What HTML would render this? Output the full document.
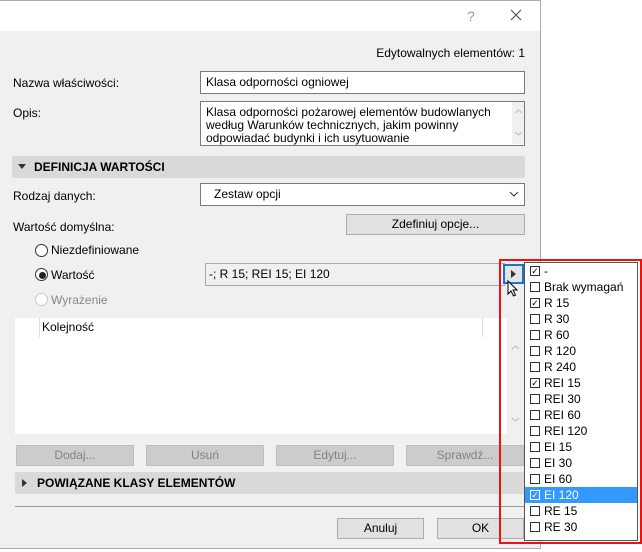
<!DOCTYPE html>
<html><head><meta charset="utf-8"><style>
*{box-sizing:border-box;margin:0;padding:0}
body{width:642px;height:552px;background:#fff;font-family:"Liberation Sans",sans-serif;font-size:12px;color:#000;position:relative;overflow:hidden}
.a{position:absolute}
.dlg{left:0;top:0;width:541px;height:549px;background:#f0f0f0;border-right:1px solid #aaa;border-bottom:1px solid #aaa;border-top:1px solid #aaa}
.title{left:0;top:1px;width:540px;height:30px;background:#fff}
.inp{background:#fff;border:1px solid #7a7a7a;padding:3px 5px;line-height:14px}
.sec{background:#d9d9d9;border-radius:2px;font-weight:bold;padding-left:22px;line-height:22px}
.btn{background:#e1e1e1;border:1px solid #adadad;text-align:center;line-height:18px}
.dis{background:#ccc;border:1px solid #bfbfbf;color:#838383;text-align:center;line-height:18px}
.rad{width:13px;height:13px;border:1px solid #333;border-radius:50%;background:#fff}
.it{position:absolute;left:0;width:112px;height:16px;line-height:16px;padding-left:19px}
.cb{position:absolute;left:5px;top:3px;width:10px;height:10px;border:1px solid #333;background:#fff;font-size:9px;line-height:8px;text-align:center}
</style></head><body>
<div class="a dlg"></div>
<div class="a title"></div>
<div class="a" style="left:467px;top:8px;color:#999;font-size:14px">?</div>
<svg class="a" style="left:510px;top:9px" width="12" height="12"><path d="M1 1L11 11M11 1L1 11" stroke="#555" stroke-width="1.2"/></svg>
<div class="a" style="left:325px;top:46px;width:200px;text-align:right;white-space:nowrap">Edytowalnych elementów: 1</div>
<div class="a" style="left:13px;top:76px">Nazwa właściwości:</div>
<div class="a inp" style="left:200px;top:71px;width:325px;height:23px">Klasa odporności ogniowej</div>
<div class="a" style="left:13px;top:106px">Opis:</div>
<div class="a inp" style="left:200px;top:101px;width:325px;height:45px;line-height:13px;padding-top:4px">Klasa odporności pożarowej elementów budowlanych<br>według Warunków technicznych, jakim powinny<br>odpowiadać budynki i ich usytuowanie</div>
<div class="a" style="left:512px;top:102px;width:12px;height:42px;background:#f0f0f0"></div>
<svg class="a" style="left:514px;top:108px" width="9" height="30"><path d="M1 5L4.5 2L8 5M1 24L4.5 27L8 24" stroke="#bbb" fill="none"/></svg>
<div class="a sec" style="left:12px;top:156px;width:513px;height:22px">DEFINICJA WARTOŚCI</div>
<svg class="a" style="left:18px;top:164px" width="8" height="6"><path d="M0 0H8L4 5Z" fill="#333"/></svg>
<div class="a" style="left:13px;top:189px">Rodzaj danych:</div>
<div class="a inp" style="left:200px;top:183px;width:325px;height:23px;padding-left:13px">Zestaw opcji</div>
<svg class="a" style="left:509px;top:191px" width="10" height="6"><path d="M1 1L5 5L9 1" stroke="#333" fill="none"/></svg>
<div class="a" style="left:13px;top:220px">Wartość domyślna:</div>
<div class="a btn" style="left:346px;top:214px;width:179px;height:21px">Zdefiniuj opcje...</div>
<div class="a rad" style="left:35px;top:244px"></div>
<div class="a" style="left:51px;top:243px">Niezdefiniowane</div>
<div class="a rad" style="left:35px;top:268px"></div>
<div class="a" style="left:39px;top:272px;width:7px;height:7px;border-radius:50%;background:#222"></div>
<div class="a" style="left:51px;top:268px">Wartość</div>
<div class="a rad" style="left:35px;top:293px;border-color:#ccc"></div>
<div class="a" style="left:51px;top:293px;color:#888">Wyrażenie</div>
<div class="a inp" style="left:205px;top:263px;width:300px;height:23px;border-color:#aaa;padding-left:3px;background:#f0f0f0">-; R 15; REI 15; EI 120</div>
<div class="a" style="left:503px;top:264px;width:21px;height:20px;border:2px solid #1a73d0;background:#e5e5e5"></div>
<svg class="a" style="left:511px;top:270px" width="5" height="8"><path d="M0 0L5 4L0 8Z" fill="#333"/></svg>
<svg class="a" style="left:507px;top:280px" width="12" height="18"><path d="M1 1L1 14L4 11L6.5 16L8.5 15L6 10L10 10Z" fill="#fff" stroke="#000" stroke-width="1"/></svg>
<div class="a" style="left:15px;top:318px;width:492px;height:116px;background:#fff"></div>
<div class="a" style="left:39px;top:318px;width:1px;height:19px;background:#ddd"></div>
<div class="a" style="left:482px;top:318px;width:1px;height:19px;background:#ddd"></div>
<div class="a" style="left:42px;top:320px">Kolejność</div>
<svg class="a" style="left:511px;top:344px" width="9" height="80"><path d="M1 5L4.5 2L8 5M1 74L4.5 77L8 74" stroke="#bbb" fill="none"/></svg>
<div class="a dis" style="left:16px;top:445px;width:118px;height:21px">Dodaj...</div>
<div class="a dis" style="left:146px;top:445px;width:118px;height:21px">Usuń</div>
<div class="a dis" style="left:276px;top:445px;width:118px;height:21px">Edytuj...</div>
<div class="a dis" style="left:406px;top:445px;width:118px;height:21px">Sprawdź...</div>
<div class="a sec" style="left:15px;top:472px;width:510px;height:22px">POWIĄZANE KLASY ELEMENTÓW</div>
<svg class="a" style="left:22px;top:479px" width="5" height="8"><path d="M0 0L5 4L0 8Z" fill="#333"/></svg>
<div class="a" style="left:15px;top:506px;width:510px;height:1px;background:#999"></div>
<div class="a btn" style="left:337px;top:518px;width:87px;height:21px">Anuluj</div>
<div class="a btn" style="left:437px;top:518px;width:87px;height:21px">OK</div>
<div class="a" style="left:499px;top:259px;width:143px;height:285px;border:2px solid #ee1111"></div>
<div class="a" style="left:524px;top:262px;width:114px;height:279px;background:#fff;border:1px solid #555">
<div class="it" style="top:0"><span class="cb">✓</span>-</div>
<div class="it" style="top:16px"><span class="cb"></span>Brak wymagań</div>
<div class="it" style="top:32px"><span class="cb">✓</span>R 15</div>
<div class="it" style="top:48px"><span class="cb"></span>R 30</div>
<div class="it" style="top:64px"><span class="cb"></span>R 60</div>
<div class="it" style="top:80px"><span class="cb"></span>R 120</div>
<div class="it" style="top:96px"><span class="cb"></span>R 240</div>
<div class="it" style="top:112px"><span class="cb">✓</span>REI 15</div>
<div class="it" style="top:128px"><span class="cb"></span>REI 30</div>
<div class="it" style="top:144px"><span class="cb"></span>REI 60</div>
<div class="it" style="top:160px"><span class="cb"></span>REI 120</div>
<div class="it" style="top:176px"><span class="cb"></span>EI 15</div>
<div class="it" style="top:192px"><span class="cb"></span>EI 30</div>
<div class="it" style="top:208px"><span class="cb"></span>EI 60</div>
<div class="it" style="top:224px;background:#3399ff;color:#fff"><span class="cb" style="background:#3399ff;border-color:#fff;color:#fff">✓</span>EI 120</div>
<div class="it" style="top:240px"><span class="cb"></span>RE 15</div>
<div class="it" style="top:256px"><span class="cb"></span>RE 30</div>
</div>
</body></html>
